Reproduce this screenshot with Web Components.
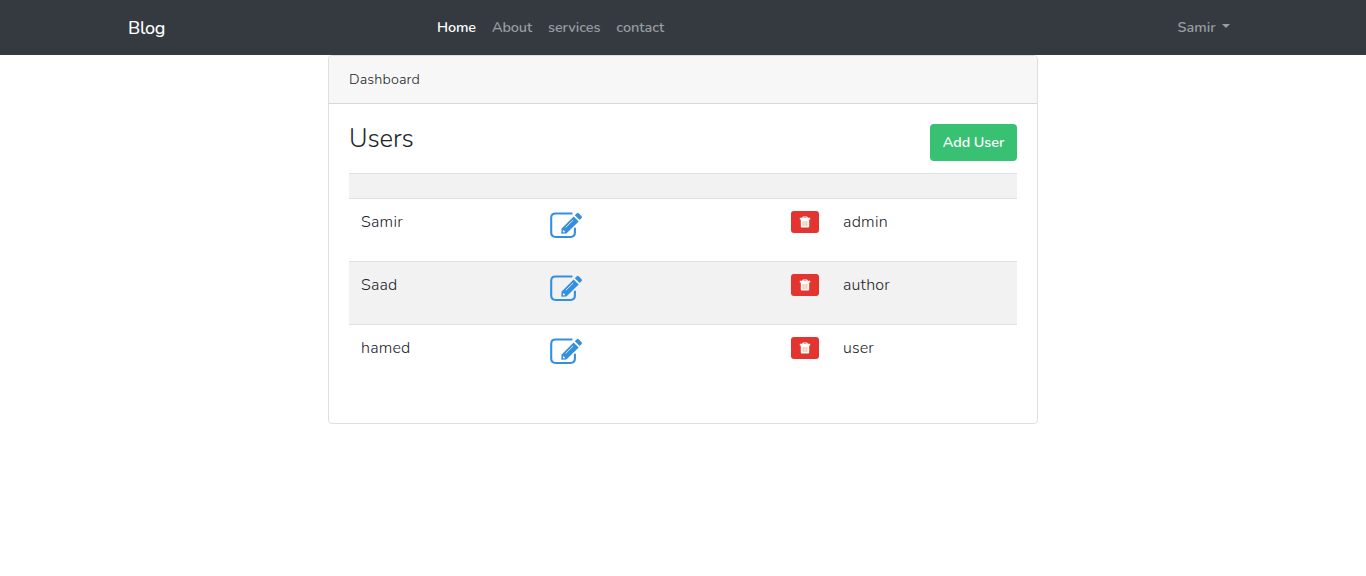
<!DOCTYPE html>
<html lang="en"><head><meta charset="utf-8"><title>Blog</title>
<style>html,body{margin:0;background:#fff;font-family:Nunito,Lato,"Open Sans",sans-serif;color:#212529}</style></head>
<body><blog-app></blog-app>
<script>
const define=(name,html)=>customElements.define(name,class extends HTMLElement{
  constructor(){super();this.attachShadow({mode:'open'}).innerHTML=html}
});
// A label whose tracking is adjusted to a chosen advance width.
customElements.define('fit-label',class extends HTMLElement{
  constructor(){super();this.attachShadow({mode:'open'}).innerHTML='<style>:host{display:inline-block;white-space:nowrap;justify-self:start}</style><slot></slot>'}
  connectedCallback(){
    const want=+this.getAttribute('w'),n=this.textContent.length;
    this.style.letterSpacing=(want-this.getBoundingClientRect().width)/n+'px';
  }
});
define('edit-icon',`<style>:host{display:block;width:33px;height:28px}svg{display:block}</style>
<svg width="33" height="28" viewBox="0 0 33 28"><path d="M21.6 2.5H5.6Q1.2 2.5 1.2 6.9V21.6Q1.2 26 5.6 26H20.5Q24.9 26 24.9 21.6V17.5" fill="none" stroke="#3490dc" stroke-width="2.1" stroke-linecap="round"/><path d="M23.6 5.4L28.7 10.5L16.4 22.6L11.3 22.8L11.6 17.5Z" fill="#3490dc"/><path d="M24.8 4.3L26.9 2.2Q27.8 1.3 28.7 2.2L31.6 5.2Q32.5 6.1 31.6 7L29.7 9Z" fill="#3490dc"/><path d="M15.7 16.4L23.2 9" stroke="#fff" stroke-width=".8"/><path d="M13.3 19L15.3 21L13.6 21.4L12.8 20.7Z" fill="#fff"/></svg>`);
define('delete-button',`<style>:host{display:flex;width:28px;height:22px;border-radius:3px;background:#e3342f;align-items:center;justify-content:center}svg{display:block}</style>
<svg width="12" height="13" viewBox="0 0 12 13"><path d="M4 .5H8L9 1.8H11.2V3.6H.8V1.8H3ZM1.8 3.6H10.2V10.5Q10.2 11.6 9.1 11.6H2.9Q1.8 11.6 1.8 10.5Z" fill="#fff"/><path d="M4.5 1.8H7.5L7.1 1.3H4.9Z" fill="#e3342f"/><path d="M4.2 5V10M6 5V10M7.8 5V10" stroke="#f3b088" stroke-width=".9"/></svg>`);
define('nav-bar',`<style>
:host{display:block;height:55px;background:#343a40;color:#999ca0}
nav{height:55px;width:1102px;margin-left:128px;display:flex;align-items:center;font-size:14.4px;font-weight:600;line-height:22px}
.brand{color:#fff;font-size:18px;font-weight:500;width:309px;line-height:30px}
.links{display:flex;gap:16px;flex:1;padding-bottom:2px}.active{color:#fff}
.user{display:flex;align-items:center;gap:6.5px;padding-bottom:2px}
.user i{border:4.5px solid transparent;border-top-color:currentColor;border-bottom:0;margin-top:-1px}
</style><nav><div class="brand"><fit-label w="37">Blog</fit-label></div>
<div class="links"><fit-label class="active" w="39">Home</fit-label><fit-label w="40">About</fit-label><fit-label w="52.3">services</fit-label><fit-label w="48">contact</fit-label></div>
<div class="user"><fit-label w="38">Samir</fit-label><i></i></div></nav>`);
customElements.define('user-row',class extends HTMLElement{
  constructor(){super();this.attachShadow({mode:'open'}).innerHTML=`<style>
:host{display:grid;grid-template-columns:189px 241px 52px 1fr;box-sizing:border-box;height:63px;padding:12px;border-top:1px solid #dee2e6;align-items:start;font-size:16px;line-height:22px}
:host([striped]){background:#f2f2f2}
</style><slot name="name"></slot><edit-icon></edit-icon><delete-button></delete-button><slot name="role"></slot>`}
});
define('user-card',`<style>
:host{display:block;box-sizing:border-box;width:710px;height:369px;margin:0 auto;border:1px solid #dfdfdf;border-radius:4px;background:#fff;font-weight:350}
header{height:48px;box-sizing:border-box;border-bottom:1px solid #d8d8d8;background:#f7f7f7;padding:0 20px 2px;display:flex;align-items:center;font-size:14.4px;border-radius:3px 3px 0 0}
main{padding:20px}.top{display:flex;justify-content:space-between;height:49px}
h1{font-size:25.6px;font-weight:350;line-height:30px;margin:0}
.add{display:flex;box-sizing:border-box;width:87px;height:37px;padding:0 0 2px;border:0;border-radius:4px;background:#38c172;color:#fff;font:600 14.4px/22px Nunito,Lato,sans-serif;align-items:center;justify-content:center}
.head{height:25px;box-sizing:border-box;border-top:1px solid #dee2e6;background:#f2f2f2}
</style><header><fit-label w="71">Dashboard</fit-label></header><main><div class="top"><h1><fit-label w="64.5">Users</fit-label></h1><button class="add"><fit-label w="61.5">Add User</fit-label></button></div>
<div class="head"></div>
<user-row><fit-label slot="name" w="42">Samir</fit-label><fit-label slot="role" w="45">admin</fit-label></user-row>
<user-row striped><fit-label slot="name" w="36.5">Saad</fit-label><fit-label slot="role" w="47">author</fit-label></user-row>
<user-row><fit-label slot="name" w="49.5">hamed</fit-label><fit-label slot="role" w="31">user</fit-label></user-row></main>`);
define('blog-app','<style>:host{display:block}</style><nav-bar></nav-bar><user-card></user-card>');
</script></body></html>
